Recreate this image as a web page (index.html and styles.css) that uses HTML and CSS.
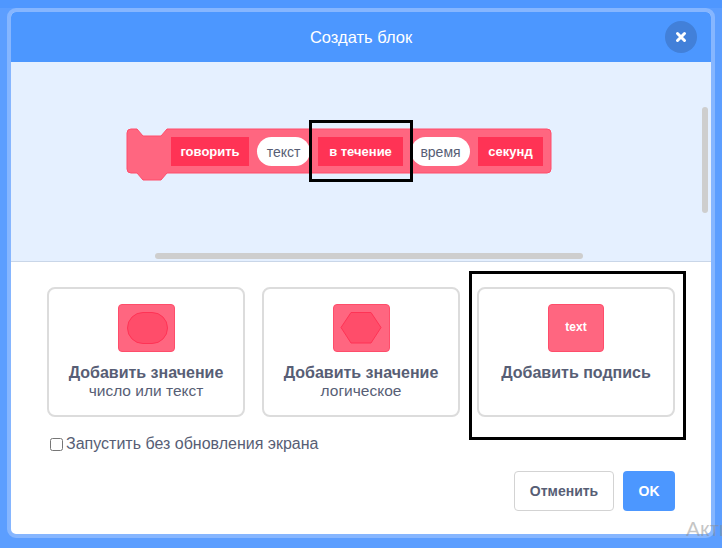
FILE: index.html
```html
<!DOCTYPE html>
<html lang="ru">
<head>
<meta charset="utf-8">
<title>Создать блок</title>
<link rel="stylesheet" href="styles.css">
</head>
<body>
<div class="modal">
  <header class="modal-header">
    <div class="header-spacer"></div>
    <h1 class="modal-title">Создать блок</h1>
    <button class="close-btn" aria-label="Закрыть">
      <svg width="12" height="12" viewBox="0 0 12 12"><path d="M2.5 2.5 L9.5 9.5 M9.5 2.5 L2.5 9.5" stroke="#fff" stroke-width="3" stroke-linecap="round"/></svg>
    </button>
  </header>

  <section class="workspace">
    <div class="block">
      <svg class="block-shape" width="426" height="54" viewBox="-1 -1 426 54">
        <path d="M0 4 Q0 0 4 0 H10 L16 7 H34 L40 0 H420 Q424 0 424 4 V40 Q424 44 420 44 H40 L34 51 H16 L10 44 H4 Q0 44 0 40 Z" fill="#ff6680" stroke="#ff4d6a" stroke-width="1"/>
      </svg>
      <span class="label w-say">говорить</span>
      <span class="pill w-text">текст</span>
      <span class="label w-for">в течение</span>
      <span class="pill w-time">время</span>
      <span class="label w-sec">секунд</span>
      <span class="highlight-box"></span>
    </div>
    <div class="vscroll"></div>
    <div class="hscroll"></div>
  </section>

  <section class="modal-body">
    <div class="options">
      <div class="option">
        <div class="opt-icon">
          <svg width="57" height="48" viewBox="0 0 57 48"><rect x="9.5" y="8.5" width="40" height="31" rx="15.5" fill="#ff4d6a" stroke="#ff3355" stroke-width="1"/></svg>
        </div>
        <div class="opt-title">Добавить значение</div>
        <div class="opt-sub">число или текст</div>
      </div>
      <div class="option">
        <div class="opt-icon">
          <svg width="57" height="48" viewBox="0 0 57 48"><polygon points="8,23.5 18,8.5 38,8.5 48,23.5 38,39 18,39" fill="#ff4d6a" stroke="#ff3355" stroke-width="1"/></svg>
        </div>
        <div class="opt-title">Добавить значение</div>
        <div class="opt-sub">логическое</div>
      </div>
      <div class="option option-marked">
        <div class="opt-icon opt-icon-text">text</div>
        <div class="opt-title">Добавить подпись</div>
        <span class="highlight-card"></span>
      </div>
    </div>

    <label class="check-row">
      <input type="checkbox" class="check">
      <span>Запустить без обновления экрана</span>
    </label>

    <div class="buttons">
      <button class="btn btn-cancel">Отменить</button>
      <button class="btn btn-ok">OK</button>
    </div>
  </section>
</div>
<div class="watermark">Акти</div>
</body>
</html>
```

FILE: styles.css
```css
* { box-sizing: border-box; }

html, body {
  margin: 0;
  padding: 0;
  width: 722px;
  height: 548px;
  overflow: hidden;
}

body {
  background: linear-gradient(#4f97ff 0, #4f97ff 8px, #5c9eff 8px);
  font-family: "Liberation Sans", Arial, Helvetica, sans-serif;
  color: #575e75;
  position: relative;
}

.modal {
  margin: 8px 0 0 7px;
  width: 708px;
  height: 530px;
  border: 4px solid #86b6ff;
  border-radius: 9px;
  background: #fff;
  overflow: hidden;
  display: flex;
  flex-direction: column;
}

.modal-header {
  height: 50px;
  flex: none;
  background: #4c97ff;
  display: grid;
  grid-template-columns: 1fr auto 1fr;
  align-items: center;
}

.modal-title {
  margin: 0;
  font-size: 16.5px;
  font-weight: normal;
  color: #fff;
}

.close-btn {
  justify-self: end;
  margin: 0 14px 0 0;
  width: 32px;
  height: 32px;
  border-radius: 50%;
  border: none;
  padding: 0;
  background: #4280d9;
  display: flex;
  align-items: center;
  justify-content: center;
}

.workspace {
  position: relative;
  height: 200px;
  flex: none;
  background: #e5f0ff;
  border-bottom: 1px solid #c9d6e8;
  padding: 67px 0 0 116px;
}

.block {
  position: relative;
  width: 424px;
  height: 52px;
  display: flex;
  align-items: flex-start;
  gap: 8px;
  padding: 8px 0 0 44px;
}

.block-shape {
  position: absolute;
  left: -1px;
  top: -1px;
}

.label, .pill {
  position: relative;
  height: 29px;
  display: flex;
  align-items: center;
  justify-content: center;
  white-space: nowrap;
}

.label {
  background: #ff3355;
  color: #fff;
  font-size: 13px;
  font-weight: bold;
}

.pill {
  background: #fff;
  border-radius: 15px;
  color: #575e75;
  font-size: 14px;
}

.w-say { width: 78px; }
.w-text { width: 53px; }
.w-for { width: 85px; }
.w-time { width: 59px; }
.w-sec { width: 65px; }

.highlight-box {
  position: absolute;
  left: 182px;
  top: -9px;
  width: 104px;
  height: 62px;
  border: 3px solid #000;
}

.vscroll {
  position: absolute;
  left: 691px;
  top: 45px;
  width: 6px;
  height: 106px;
  border-radius: 3px;
  background: #cecece;
}

.hscroll {
  position: absolute;
  left: 144px;
  top: 191px;
  width: 428px;
  height: 6px;
  border-radius: 3px;
  background: #cecece;
}

.modal-body {
  flex: 1;
  padding: 25px 36px 22px;
  display: flex;
  flex-direction: column;
}

.options {
  display: grid;
  grid-template-columns: repeat(3, 198px);
  gap: 17px;
  height: 130px;
}

.option {
  position: relative;
  border: 2px solid #dcdcdc;
  border-radius: 8px;
  padding-top: 15px;
  display: flex;
  flex-direction: column;
  align-items: center;
}

.opt-icon {
  width: 57px;
  height: 48px;
  background: #ff6680;
  border: 1px solid #ff4d6a;
  border-radius: 4px;
  display: flex;
  align-items: center;
  justify-content: center;
}

.opt-icon svg {
  display: block;
  margin: -1px;
}

.opt-icon-text {
  width: 56px;
  color: #fff;
  font-size: 12px;
  font-weight: bold;
  padding-bottom: 3px;
}

.opt-title {
  margin-top: 12px;
  font-size: 16px;
  line-height: 18px;
  font-weight: bold;
  color: #575e75;
}

.opt-sub {
  font-size: 15.5px;
  line-height: 18px;
  color: #575e75;
}

.highlight-card {
  position: absolute;
  left: -10px;
  top: -18px;
  width: 217px;
  height: 169px;
  border: 3px solid #000;
}

.check-row {
  margin-top: 17px;
  height: 20px;
  display: flex;
  align-items: center;
  padding-left: 3px;
  font-size: 16px;
  color: #575e75;
}

.check {
  margin: 0 3px 0 0;
  width: 13px;
  height: 13px;
}

.buttons {
  margin-top: 17px;
  display: flex;
  justify-content: flex-end;
  gap: 9px;
}

.btn {
  height: 40px;
  border-radius: 4px;
  font-family: "Liberation Sans", Arial, sans-serif;
  font-size: 14px;
  font-weight: bold;
  padding: 0;
}

.btn-cancel {
  width: 100px;
  background: #fff;
  border: 1px solid #d3d3d3;
  color: #575e75;
}

.btn-ok {
  width: 52px;
  background: #4c97ff;
  border: none;
  color: #fff;
}

.watermark {
  position: absolute;
  left: 686px;
  top: 517px;
  font-family: "Liberation Sans", Arial, sans-serif;
  font-size: 21px;
  color: rgba(140, 140, 140, 0.5);
  white-space: nowrap;
}
```
